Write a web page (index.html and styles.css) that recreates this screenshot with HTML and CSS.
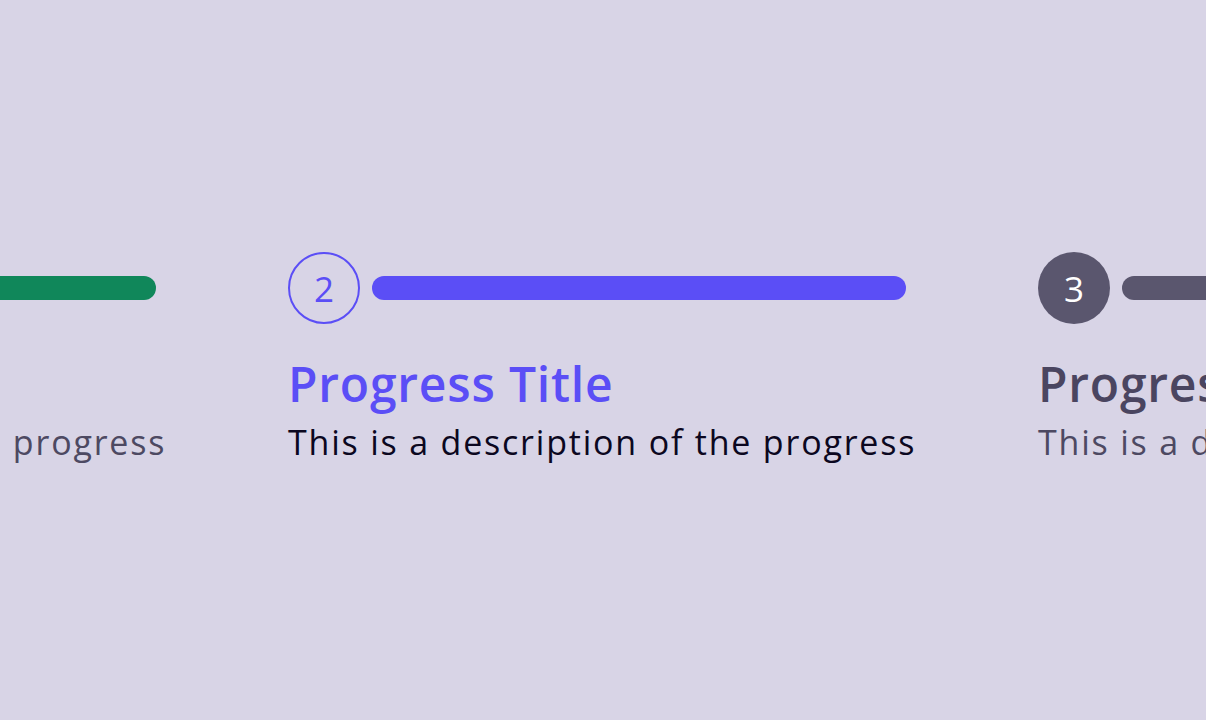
FILE: index.html
```html
<!DOCTYPE html>
<html lang="en">
<head>
<meta charset="utf-8">
<title>Progress steps</title>
<link rel="stylesheet" href="styles.css">
</head>
<body>
<div class="steps">
  <div class="step step--done">
    <div class="step__head">
      <div class="step__dot">1</div>
      <div class="step__bar"></div>
    </div>
    <div class="step__title">Progress Title</div>
    <div class="step__desc">This is a description of the progress</div>
  </div>
  <div class="step step--active">
    <div class="step__head">
      <div class="step__dot">2</div>
      <div class="step__bar"></div>
    </div>
    <div class="step__title">Progress Title</div>
    <div class="step__desc">This is a description of the progress</div>
  </div>
  <div class="step step--todo">
    <div class="step__head">
      <div class="step__dot">3</div>
      <div class="step__bar"></div>
    </div>
    <div class="step__title">Progress Title</div>
    <div class="step__desc">This is a description of the progress</div>
  </div>
</div>
</body>
</html>
```
FILE: styles.css
```css
html, body {
  margin: 0;
  padding: 0;
}

body {
  width: 1206px;
  height: 720px;
  overflow: hidden;
  background: #d8d4e6;
  font-family: "Open Sans", "Liberation Sans", sans-serif;
}

.steps {
  display: flex;
  gap: 132px;
  margin-left: -462px;
  padding-top: 252px;
}

.step {
  flex: 0 0 618px;
  min-width: 0;
  display: flex;
  flex-direction: column;
}

.step__head {
  display: flex;
  align-items: center;
  gap: 12px;
  height: 72px;
}

.step__dot {
  box-sizing: border-box;
  width: 72px;
  height: 72px;
  border-radius: 50%;
  display: flex;
  align-items: center;
  justify-content: center;
  font-size: 35px;
  font-weight: 400;
  flex-shrink: 0;
}

.step__bar {
  flex: 1;
  height: 24px;
  border-radius: 12px;
}

.step__title {
  margin-top: 34px;
  font-size: 48px;
  line-height: 52px;
  font-weight: 600;
  letter-spacing: 0.8px;
  white-space: nowrap;
}

.step__desc {
  margin-top: 8px;
  font-size: 34px;
  line-height: 48px;
  font-weight: 400;
  letter-spacing: 1.8px;
  white-space: nowrap;
}

/* completed */
.step--done .step__dot {
  background: #10875a;
  color: #ffffff;
}
.step--done .step__bar {
  background: #10875a;
}
.step--done .step__title {
  color: #4a4560;
}
.step--done .step__desc {
  color: #4d4962;
}

/* current */
.step--active .step__dot {
  border: 2px solid #5b4ef6;
  color: #5b4ef6;
}
.step--active .step__bar {
  background: #5b4ef6;
}
.step--active .step__title {
  color: #5b4ef6;
}
.step--active .step__desc {
  color: #0b0720;
}

/* upcoming */
.step--todo .step__dot {
  background: #5a566e;
  color: #ffffff;
}
.step--todo .step__bar {
  background: #5a566e;
}
.step--todo .step__title {
  color: #4a4560;
}
.step--todo .step__desc {
  color: #4d4962;
}
```
